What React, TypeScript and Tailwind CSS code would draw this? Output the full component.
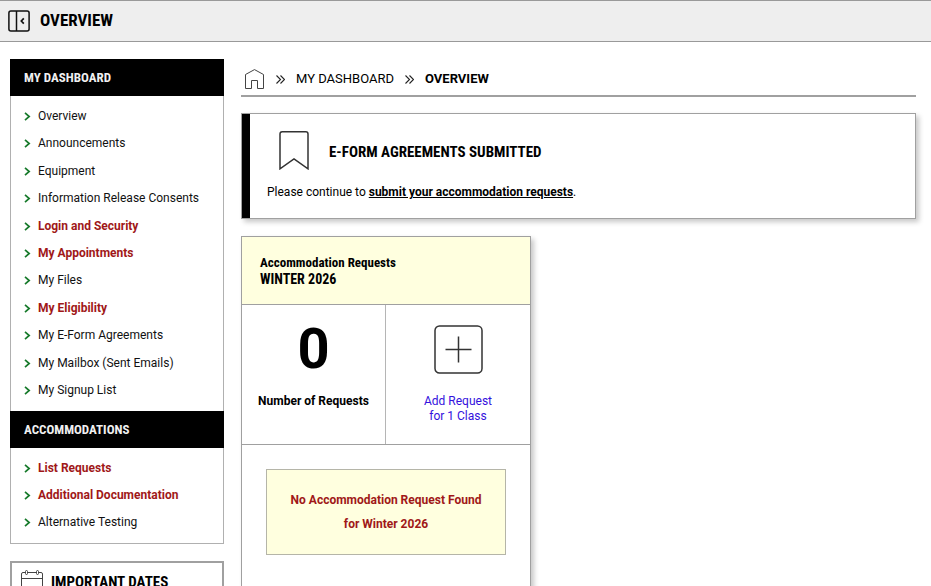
import type { ReactNode } from "react";

type Item = { label: string; alert?: boolean };

const dashboard: Item[] = [
  { label: "Overview" },
  { label: "Announcements" },
  { label: "Equipment" },
  { label: "Information Release Consents" },
  { label: "Login and Security", alert: true },
  { label: "My Appointments", alert: true },
  { label: "My Files" },
  { label: "My Eligibility", alert: true },
  { label: "My E-Form Agreements" },
  { label: "My Mailbox (Sent Emails)" },
  { label: "My Signup List" },
];

const accommodations: Item[] = [
  { label: "List Requests", alert: true },
  { label: "Additional Documentation", alert: true },
  { label: "Alternative Testing" },
];

const heading = "font-['Roboto_Condensed','Roboto',sans-serif] font-bold";

function Chevron() {
  return (
    <svg className="h-[9px] w-[7px] shrink-0" viewBox="0 0 7 9" fill="none" stroke="#177a2b" strokeWidth="1.7" aria-hidden="true">
      <path d="M1 0.8 5.2 4.5 1 8.2" />
    </svg>
  );
}

function Separator() {
  return (
    <svg className="h-[9px] w-[9px] shrink-0" viewBox="0 0 9 9" fill="none" stroke="#222" strokeWidth="1.1" aria-hidden="true">
      <path d="M0.5 0.5 4.5 4.5 0.5 8.5M4.5 0.5 8.5 4.5 4.5 8.5" />
    </svg>
  );
}

function MenuSection({ title, items, listClass = "" }: { title: string; items: Item[]; listClass?: string }) {
  return (
    <section>
      <h2 className={`${heading} bg-black px-[14px] text-[13px] leading-[37px] text-[#f0f0f0]`}>{title}</h2>
      <ul className={`flex flex-col justify-between border-x border-[#b0b0b0] py-[7px] ${listClass}`}>
        {items.map((item) => (
          <li key={item.label} className="flex items-center gap-[7px] pl-[13px] leading-[27px]">
            <Chevron />
            <a href="#" className={item.alert ? "font-bold text-[#a01818]" : "text-[#111]"}>
              {item.label}
            </a>
          </li>
        ))}
      </ul>
    </section>
  );
}

function Panel({ className, children }: { className: string; children: ReactNode }) {
  return <section className={`border border-[#a0a0a0] bg-white shadow-[3px_3px_5px_#00000038] ${className}`}>{children}</section>;
}

export default function App() {
  return (
    <div className="h-screen overflow-hidden bg-white font-['Roboto',sans-serif] text-[12px] text-black">
      <header className="flex h-[42px] items-center gap-[10px] border-y border-[#999] bg-[#eee] px-2">
        <button type="button" aria-label="Toggle menu">
          <svg className="h-[22px] w-[22px]" viewBox="0 0 22 22" fill="none" stroke="#111" strokeWidth="1.5" aria-hidden="true">
            <rect x="0.9" y="0.9" width="20.2" height="20.2" rx="2" />
            <path d="M8.5 1V21" />
            <path d="M15.8 8.3 13.3 11 15.8 13.7" strokeWidth="1.7" />
          </svg>
        </button>
        <h1 className={`${heading} text-[17px]`}>OVERVIEW</h1>
      </header>

      <div className="flex items-start gap-[17px] pt-[17px] pr-[15px] pl-[10px]">
        <aside className="w-[214px] shrink-0">
          <nav aria-label="Main" className="border-b border-[#b0b0b0]">
            <MenuSection title="MY DASHBOARD" items={dashboard} listClass="min-h-[315px]" />
            <MenuSection title="ACCOMMODATIONS" items={accommodations} />
          </nav>
          <section className="mt-[17px] border-2 border-[#a0a0a0] px-[9px] py-[7px]">
            <h2 className={`${heading} flex items-start gap-2 text-[15px] leading-[24px]`}>
              <svg className="h-[23px] w-[22px]" viewBox="0 0 22 23" fill="none" stroke="#444" strokeWidth="1" aria-hidden="true">
                <path d="M4 2.5H2Q.5 2.5.5 4V22.5H21.5V4Q21.5 2.5 20 2.5H18M7 2.5H15M.5 8.5H21.5" />
                <rect x="4.5" y=".5" width="2" height="4" rx="1" />
                <rect x="15.5" y=".5" width="2" height="4" rx="1" />
              </svg>
              IMPORTANT DATES
            </h2>
          </section>
        </aside>

        <main className="min-w-0 flex-1">
          <nav aria-label="Breadcrumb" className="flex h-[38px] items-center gap-[11px] border-b-2 border-[#a0a0a0] pt-1 pl-1 text-[13px]">
            <a href="#" aria-label="Home">
              <svg className="h-5 w-5" viewBox="0 0 20 20" fill="none" stroke="#444" strokeWidth="1" aria-hidden="true">
                <path d="M.5 19.5V5.5L9.5 .6 18.5 5.5V19.5H12.5V11.5H6.5V19.5Z" />
              </svg>
            </a>
            <Separator />
            <a href="#">MY DASHBOARD</a>
            <Separator />
            <span className="font-bold">OVERVIEW</span>
          </nav>

          <Panel className="mt-4 flex">
            <div className="w-2 bg-black" />
            <div className="px-[17px] pt-[17px] pb-4">
              <div className="flex items-center gap-5 pl-3">
                <svg className="h-[39px] w-[30px]" viewBox="0 0 30 39" fill="none" stroke="#333" strokeWidth="1.5" aria-hidden="true">
                  <path d="M1 37.8V3Q1 .8 3.2 .8H26.8Q29 .8 29 3V37.8L15 27.8Z" />
                </svg>
                <h2 className={`${heading} pt-1 text-[15px]`}>E-FORM AGREEMENTS SUBMITTED</h2>
              </div>
              <p className="mt-3 leading-5">
                Please continue to{" "}
                <a href="#" className="font-bold underline">
                  submit your accommodation requests
                </a>
                .
              </p>
            </div>
          </Panel>

          <Panel className="mt-[17px] w-[290px]">
            <h2 className={`${heading} border-b border-[#a0a0a0] bg-[#ffffdf] px-[18px] pt-[18px] pb-[17px] leading-4`}>
              <span className="block text-[13px]">Accommodation Requests</span>
              <span className="block text-[14px]">WINTER 2026</span>
            </h2>
            <div className="grid grid-cols-2 border-b border-[#a0a0a0] text-center leading-[15px]">
              <div className="border-r border-[#b5b5b5] pt-[20px] pb-[28px] font-bold">
                <div className="text-[56px] leading-[49px]">0</div>
                <p className="mt-5">Number of Requests</p>
              </div>
              <a href="#" className="flex flex-col items-center gap-5 pt-[20px] pb-[20px] text-[#3311dd]">
                <svg className="h-[49px] w-[49px]" viewBox="0 0 49 49" fill="none" stroke="#333" strokeWidth="1.5" aria-hidden="true">
                  <rect x="1" y="1" width="47" height="47" rx="4.5" />
                  <path d="M11.5 24.5H37.5M24.5 11.5V37.5" />
                </svg>
                <span>
                  Add Request
                  <br />
                  for 1 Class
                </span>
              </a>
            </div>
            <div className="px-6 pt-6 pb-12">
              <p className="border border-[#b5b5a8] bg-[#ffffdf] py-[18px] text-center leading-6 font-bold text-[#a01818]">
                No Accommodation Request Found
                <br />
                for Winter 2026
              </p>
            </div>
          </Panel>
        </main>
      </div>
    </div>
  );
}
